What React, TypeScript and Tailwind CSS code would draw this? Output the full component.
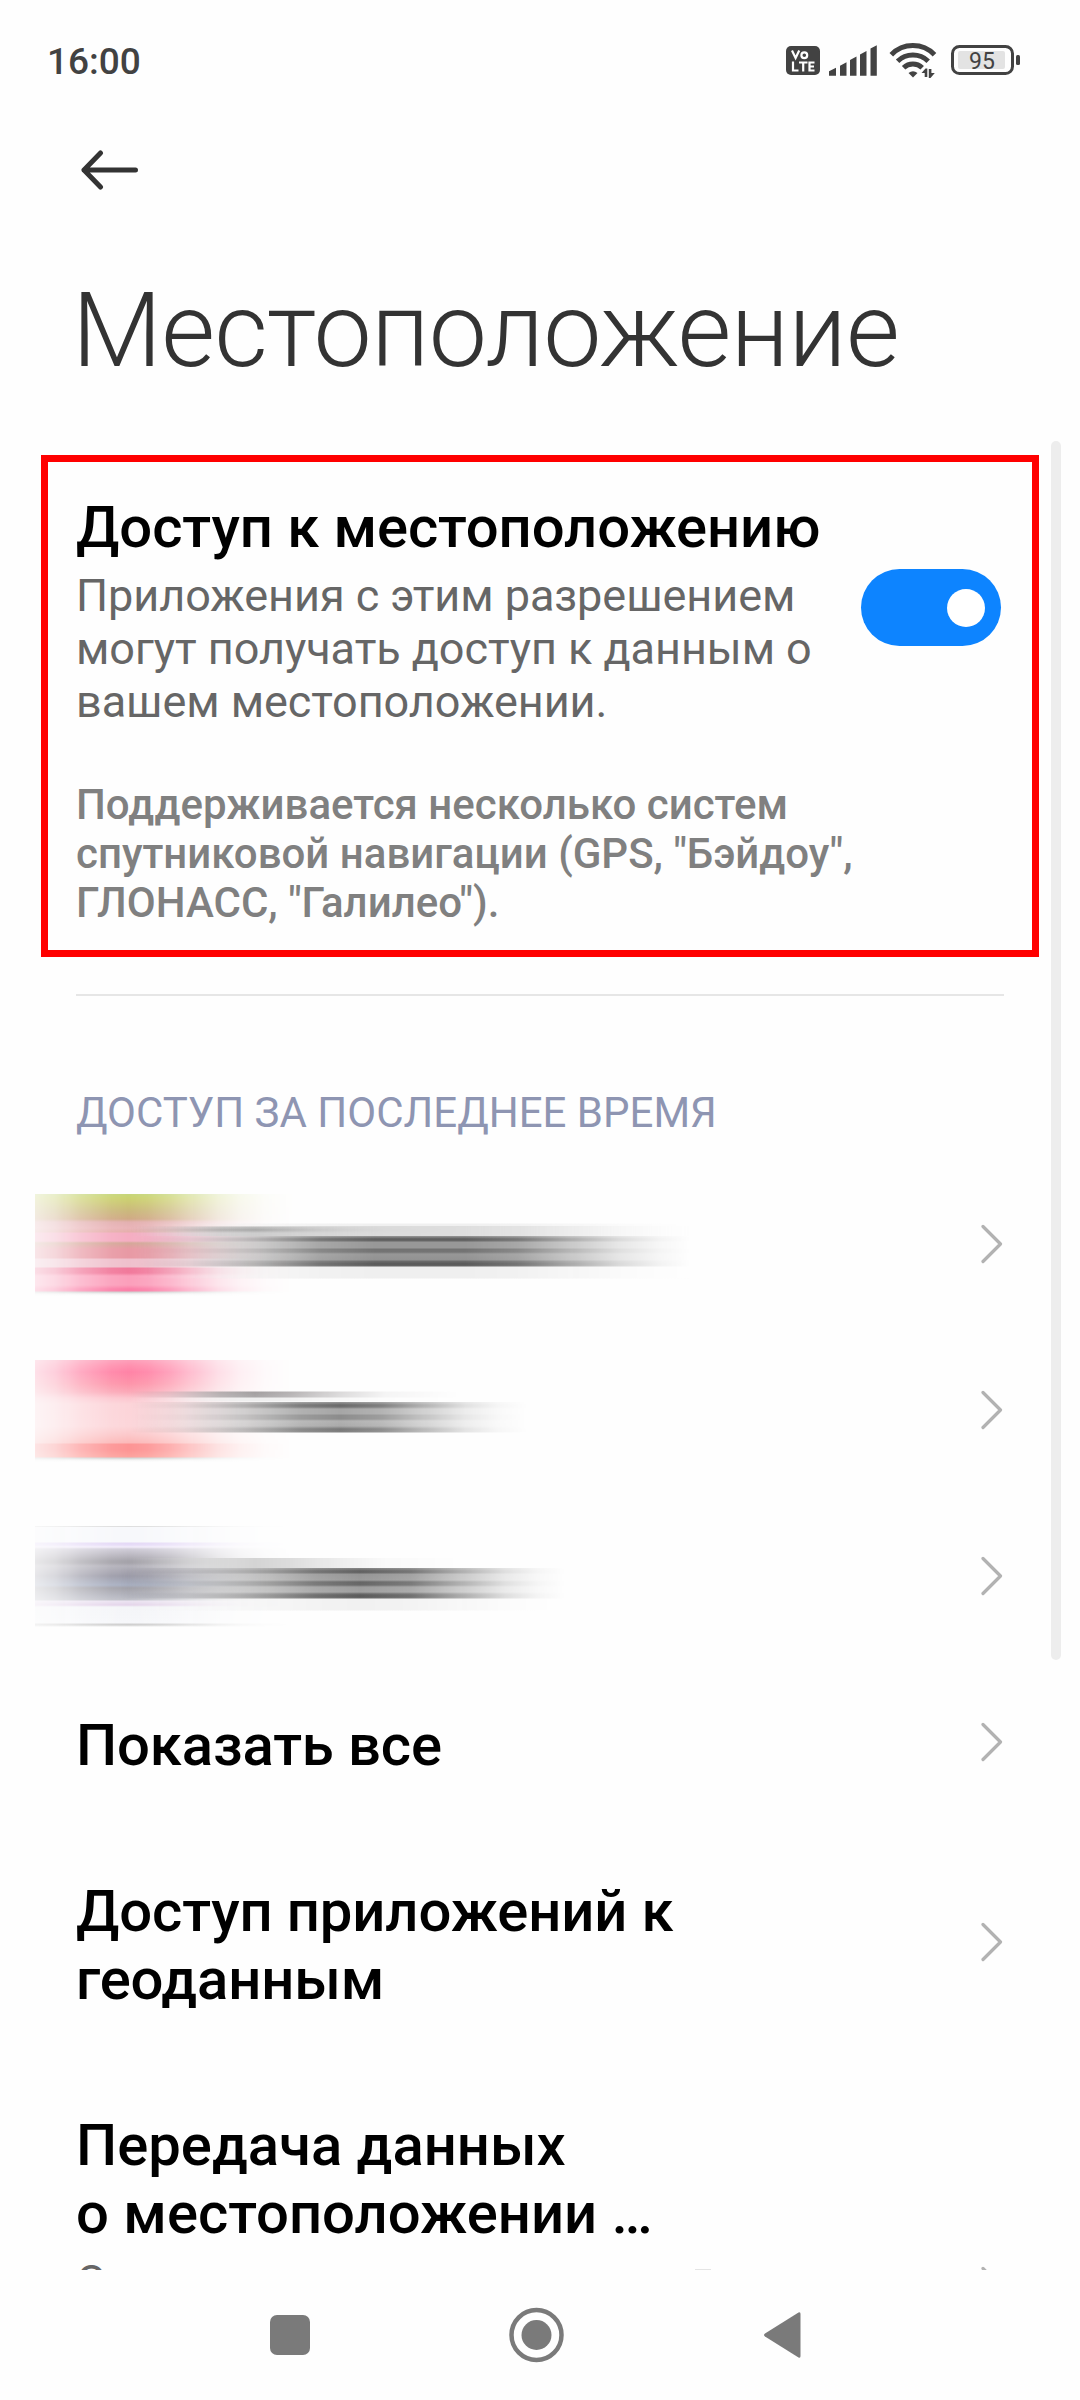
import type { ReactNode } from "react";

function StatusBar() {
  return (
    <header className="flex h-[120px] shrink-0 items-start justify-between pl-[47px] pr-[60px] pt-[40px] text-[#424242]">
      <span className="text-[37px] font-medium leading-[44px]">16:00</span>
      <svg width="240" height="40" viewBox="780 40 240 40" fill="#424242">
        <rect x="786" y="46" width="34" height="29" rx="5" />
        <g fill="none" stroke="#fff" strokeWidth="2.200">
          <path d="M792 50.5l3.6 7.5 3.6-7.5" />
          <circle cx="804.3" cy="55.3" r="2.9" />
          <path d="M793 61.500v9h5.500M799 62.500h8.500M803.200 62.500v9M814.500 62.500h-5v8h5M809.500 66.500h4.500" />
        </g>
        <path d="M829 75.700v-4.500l7-3.500v8zM840 75.700v-10l6.500-3.500v13.500zM850 75.700V60l6.500-3.500v19.200zM860 75.700V54.500l6.500-3.500v24.700zM870.500 75.700V48.500l6.300-3.300v30.500z" />
        <g fill="none" stroke="#424242" strokeWidth="5">
          <path d="M891.300 54.800a30 30 0 0 1 43.200 0" />
          <path d="M897.600 61.300a22 22 0 0 1 30.600 0" />
          <path d="M903.600 67.800a13.500 13.500 0 0 1 18.600 0" />
        </g>
        <path d="M908.500 73q4.500-3.600 9 0l-4.500 4.500z" />
        <path d="M921.500 73l4-4.500h1.800v8.500h-2.600v-4zM928.800 69h2.600v4h3.400l-4.300 5h-1.700z" />
        <rect x="952.500" y="46.500" width="60" height="27" rx="7" fill="none" stroke="#424242" strokeWidth="3" />
        <rect x="958" y="51" width="47" height="18" rx="2" fill="#e3e3e3" />
        <rect x="1016" y="55" width="4" height="10" rx="1.500" />
        <text x="982" y="69" textAnchor="middle" fontSize="23" fontFamily="Roboto, sans-serif">
          95
        </text>
      </svg>
    </header>
  );
}

function Chevron() {
  return (
    <svg width="22" height="40" viewBox="0 0 22 40" fill="none" className="shrink-0">
      <path d="M2 2.500L19.500 20 2 37.500" stroke="#b2b2b2" strokeWidth="3.200" strokeLinecap="round" strokeLinejoin="round" />
    </svg>
  );
}

function Row({ children, tall = false }: { children: ReactNode; tall?: boolean }) {
  return (
    <div
      className={
        tall
          ? "flex h-[234px] shrink-0 items-center justify-between pl-[76px] pr-[77px]"
          : "flex h-[166px] shrink-0 items-center justify-between pl-[76px] pr-[77px]"
      }
    >
      <p className="pt-[6px] text-[58px] font-medium leading-[68px] tracking-[-0.12px] text-black">{children}</p>
      <Chevron />
    </div>
  );
}

function BlurredRow({ children }: { children: ReactNode }) {
  return (
    <div className="flex h-[166px] shrink-0 items-center justify-between pl-[35px] pr-[77px]">
      <div className="mt-[2px] grid h-[102px] w-[680px] items-start *:col-start-1 *:row-start-1">{children}</div>
      <Chevron />
    </div>
  );
}

const iconMask =
  "h-[102px] w-[270px] [mask-image:linear-gradient(90deg,rgba(0,0,0,.24),rgba(0,0,0,.38)_20px,rgba(0,0,0,.68)_46px,rgba(0,0,0,.93)_76px,#000_93px,rgba(0,0,0,.93)_112px,rgba(0,0,0,.74)_135px,rgba(0,0,0,.48)_160px,rgba(0,0,0,.26)_183px,rgba(0,0,0,.12)_205px,rgba(0,0,0,.04)_230px,transparent_258px)]";

const lineMask =
  "h-[102px] w-[480px] [mask-image:linear-gradient(90deg,transparent_95px,rgba(0,0,0,.25)_135px,rgba(0,0,0,.8)_185px,#000_220px,rgba(0,0,0,.8)_255px,rgba(0,0,0,.38)_305px,rgba(0,0,0,.1)_350px,transparent_425px)]";

export default function App() {
  return (
    <div className="relative flex h-[2400px] w-[1080px] flex-col overflow-hidden bg-[#fefefe] font-['Roboto',sans-serif]">
      <StatusBar />

      <div className="flex h-[150px] shrink-0 items-start pl-[80px] pt-[30px]">
        <svg width="60" height="40" viewBox="0 0 60 40" fill="none" stroke="#333" strokeWidth="5" strokeLinecap="round" strokeLinejoin="round">
          <path d="M55.500 20H4M20.500 3L4 20l16.500 17" />
        </svg>
      </div>
      <h1 className="h-[185px] shrink-0 pl-[72px] text-[104px] font-light leading-[122px] tracking-[-0.8px] text-[#333]">Местоположение</h1>

      <section className="ml-[41px] flex h-[502px] w-[998px] shrink-0 flex-col border-[7px] border-[#ff0000] pl-[28px] pr-[31px] pt-[31px]">
        <div className="flex justify-between">
          <div>
            <h2 className="text-[58px] font-medium leading-[68px] tracking-[-0.08px] text-black">Доступ к местоположению</h2>
            <p className="mt-[8px] text-[45px] leading-[53px] tracking-[-0.05px] text-[#666]">
              Приложения с этим разрешением
              <br />
              могут получать доступ к данным о
              <br />
              вашем местоположении.
            </p>
          </div>
          <div className="mt-[76px] flex h-[77px] w-[140px] shrink-0 items-center justify-end rounded-full bg-[#0d84ff] pr-[16px]">
            <span className="size-[38px] rounded-full bg-white" />
          </div>
        </div>
        <p className="mt-[52px] text-[42px] font-medium leading-[49px] text-[#808080]">
          Поддерживается несколько систем
          <br />
          спутниковой навигации (GPS, "Бэйдоу",
          <br />
          ГЛОНАСС, "Галилео").
        </p>
      </section>

      <div className="mx-[76px] mt-[37px] h-[2px] shrink-0 bg-[#e6e6e6]" />
      <h3 className="mt-[92px] h-[73px] shrink-0 pl-[76px] text-[42px] leading-[49px] text-[#8e95b2]">ДОСТУП ЗА ПОСЛЕДНЕЕ ВРЕМЯ</h3>

      <BlurredRow>
        <div
          className={`${iconMask} bg-[linear-gradient(#c6d67a,#ccd270_4px,#cbb87c_17px,#d0aa85_25px,#e3b0b0_28px,#eab4b8_34px,#e5afab_38px,#f5adc2_39px,#f5adc2_47px,#d3a898_49px,#e899a4_55px,#e899a4_64px,#efc0cc_65px,#efc0cc_73px,#f0789a_74px,#f27a9c_79px,#fb9fbb_82px,#fb9fbb_91px,#fb80a8_95px,#fb80a8_97px,#cfcfcf_98px,#f4f4f4_100px,#fefefe_102px)]`}
        />
        <div
          className={`${lineMask} bg-[linear-gradient(transparent_32px,#bdbdbd_33px,#9c9c9c_36px,#bdbdbd_38px,#cfcfcf_39px,#cfcfcf_42px,transparent_42px)]`}
        />
        <div className="h-[102px] w-[680px] bg-[linear-gradient(transparent_29px,#f0f0f0_30px,#f0f0f0_32px,rgba(200,200,200,.6)_32px,rgba(200,200,200,.6)_42px,#999_42px,#5c5c5c_45px,#686868_47px,#989898_48px,#989898_54px,#727272_55px,#747474_58px,#979797_60px,#929292_66px,#6c6c6c_67px,#585858_70px,#666_72px,#efefef_73px,#efefef_84px,transparent_85px)] [mask-image:linear-gradient(90deg,transparent_100px,rgba(0,0,0,.13)_155px,rgba(0,0,0,.45)_220px,rgba(0,0,0,.85)_285px,#000_340px,#000_430px,rgba(0,0,0,.85)_482px,rgba(0,0,0,.5)_538px,rgba(0,0,0,.22)_585px,rgba(0,0,0,.07)_625px,transparent_655px)]" />
      </BlurredRow>

      <BlurredRow>
        <div
          className={`${iconMask} bg-[linear-gradient(#fda0ba,#ff92b0_5px,#ff83a6_12px,#fd95aa_24px,#fba9b8_32px,#fcc6cf_38px,#fcd4d9_44px,#fcd6da_66px,#fcc8ca_75px,#fcb8b8_83px,#fd9494_84px,#fd9494_90px,#fda39e_97px,#cfd4d4_98px,#f4f4f4_100px,#fefefe_102px)]`}
        />
        <div className={`${lineMask} bg-[linear-gradient(transparent_31px,#a39fa0_32px,#aaa7a8_37px,#eee_38px,#eee_41px,transparent_42px)]`} />
        <div className="h-[102px] w-[520px] bg-[linear-gradient(transparent_42px,#999_42px,#686868_45px,#707070_47px,#a6a6a6_49px,#a6a6a6_54px,#8c8c8c_55px,#8c8c8c_59px,#b0b0b0_61px,#aaa_66px,#777_69px,#808080_72px,transparent_73px)] [mask-image:linear-gradient(90deg,transparent_95px,rgba(0,0,0,.16)_148px,rgba(0,0,0,.5)_208px,rgba(0,0,0,.87)_265px,#000_305px,rgba(0,0,0,.85)_346px,rgba(0,0,0,.5)_390px,rgba(0,0,0,.2)_430px,rgba(0,0,0,.06)_462px,transparent_492px)]" />
      </BlurredRow>

      <BlurredRow>
        <div
          className={`${iconMask} bg-[linear-gradient(#dedede_1px,#f7f8fb_1px,#f7f8fb_16px,#e4d8f6_17px,#e6dcf7_19px,#f2ecfa_21px,#d0cdd8_23px,#a5a3aa_35px,#a5a3aa_37px,#b4b2bb_40px,#9c9ba8_50px,#a9b0c2_59px,#a3a2aa_62px,#b5b6c0_70px,#c0c1c9_74px,#ece4f2_75px,#e4d4ea_79px,#f4f5f8_81px,#f6f7fa_97px,#cfcfcf_98px,#cfcfcf_99px,#fefefe_101px)]`}
        />
        <div className={`${lineMask} bg-[linear-gradient(transparent_32px,#d4d4d4_32px,#d4d4d4_42px,transparent_42px)]`} />
        <div className="h-[102px] w-[550px] bg-[linear-gradient(transparent_42px,#888_42px,#606060_45px,#666_47px,#959595_48px,#9a9a9a_54px,#656565_56px,#686868_59px,#9c9c9c_61px,#a0a0a0_66px,#666_68px,#585858_70px,#666_72px,#f1f1f1_73px,#f1f1f1_84px,transparent_85px)] [mask-image:linear-gradient(90deg,transparent_85px,rgba(0,0,0,.18)_150px,rgba(0,0,0,.5)_213px,rgba(0,0,0,.87)_280px,#000_325px,rgba(0,0,0,.87)_376px,rgba(0,0,0,.5)_427px,rgba(0,0,0,.2)_470px,rgba(0,0,0,.06)_502px,transparent_530px)]" />
      </BlurredRow>

      <Row>Показать все</Row>
      <Row tall>
        Доступ приложений к
        <br />
        геоданным
      </Row>

      <div className="flex h-[211px] shrink-0 items-start justify-between overflow-hidden pl-[76px] pr-[77px] pt-[52px]">
        <div>
          <p className="text-[58px] font-medium leading-[68px] text-black">
            Передача данных
            <br />о местоположении …
          </p>
          <p className="mt-[8px] text-[45px] leading-[53px] text-[#666]">О</p>
        </div>
        <div className="flex items-start">
          <span className="mr-[270px] mt-[158px] h-px w-[16px] bg-[#e4e4e4]" />
          <div className="mt-[155px]">
            <Chevron />
          </div>
        </div>
      </div>

      <nav className="relative h-[130px] shrink-0 bg-[#fefefe]">
        <svg width="1080" height="130" viewBox="0 2270 1080 130" fill="#7a7a7a">
          <rect x="270" y="2315" width="40" height="40" rx="7" />
          <circle cx="536.500" cy="2335" r="25" fill="none" stroke="#7a7a7a" strokeWidth="4.500" />
          <circle cx="536.500" cy="2335" r="15" />
          <path d="M765 2333.500q-2 1.500 0 3l33.500 21q2 1 2-1.500v-42q0-2.500-2-1.500z" />
        </svg>
      </nav>

      <div className="absolute left-[1051px] top-[441px] h-[1219px] w-[10px] rounded-full bg-[#ededed]" />
    </div>
  );
}
